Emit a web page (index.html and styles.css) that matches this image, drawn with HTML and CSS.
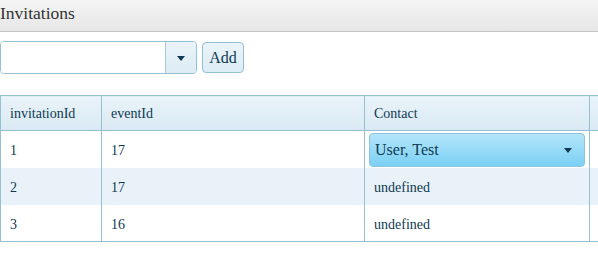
FILE: index.html
```html
<!DOCTYPE html>
<html lang="en">
<head>
  <meta charset="UTF-8" />
  <title>Invitations</title>
  <link rel="stylesheet" href="styles.css">
</head>
<body>
  <div class="page-header">Invitations</div>

  <div class="toolbar">
    <div class="combo">
      <input type="text" class="combo-input" />
      <span class="combo-button"><span class="arrow"></span></span>
    </div>
    <button class="add-btn">Add</button>
  </div>

  <table class="grid">
    <colgroup>
      <col class="col-id">
      <col class="col-event">
      <col class="col-contact">
      <col>
    </colgroup>
    <thead>
      <tr>
        <th>invitationId</th>
        <th>eventId</th>
        <th>Contact</th>
        <th></th>
      </tr>
    </thead>
    <tbody>
      <tr>
        <td>1</td>
        <td>17</td>
        <td class="edit-cell">
          <div class="dropdown">
            <span>User, Test</span>
            <span class="arrow"></span>
          </div>
        </td>
        <td></td>
      </tr>
      <tr class="alt">
        <td>2</td>
        <td>17</td>
        <td>undefined</td>
        <td></td>
      </tr>
      <tr>
        <td>3</td>
        <td>16</td>
        <td>undefined</td>
        <td></td>
      </tr>
    </tbody>
  </table>
</body>
</html>
```

FILE: styles.css
```css
* {
  box-sizing: border-box;
}

body {
  margin: 0;
  padding: 0;
  font-family: "Liberation Serif", "Times New Roman", serif;
  color: #0f3a52;
  background: #fff;
  overflow: hidden;
}

.page-header {
  height: 32px;
  padding: 3px 0 0 0;
  font-family: "Liberation Serif", serif;
  font-size: 17.5px;
  color: #333;
  background: linear-gradient(to bottom, #f5f5f5, #e6e6e6);
  border-bottom: 1px solid #c5c5c5;
}

.toolbar {
  display: flex;
  align-items: center;
  gap: 5px;
  margin-top: 9px;
  height: 33px;
}

.combo {
  display: flex;
  width: 197px;
  height: 33px;
  border: 1px solid #94c0d2;
  border-radius: 4px;
  overflow: hidden;
}

.combo-input {
  flex: 1;
  min-width: 0;
  border: none;
  outline: none;
  padding: 0 6px;
  font-family: "Liberation Serif", serif;
  font-size: 14px;
  background: #fff;
}

.combo-button {
  width: 31px;
  display: flex;
  align-items: center;
  justify-content: center;
  border-left: 1px solid #a9cbdb;
  background: linear-gradient(to bottom, #eaf3f9, #dcecf5);
}

.arrow {
  width: 0;
  height: 0;
  border-left: 4px solid transparent;
  border-right: 4px solid transparent;
  border-top: 5px solid #0f3a52;
  margin-top: 2px;
}

.add-btn {
  height: 31px;
  width: 42px;
  padding: 0;
  font-family: "Liberation Serif", serif;
  font-size: 16px;
  color: #0f3a52;
  background: linear-gradient(to bottom, #eaf3f9, #dcecf5);
  border: 1px solid #94c0d2;
  border-radius: 4px;
}

.grid {
  margin-top: 21px;
  width: 100%;
  table-layout: fixed;
  border-collapse: collapse;
  font-family: "Liberation Serif", serif;
  font-size: 14px;
}

.col-id {
  width: 101px;
}

.col-event {
  width: 263px;
}

.col-contact {
  width: 225px;
}

.grid th,
.grid td {
  border: 1px solid #94c0d2;
  text-align: left;
  padding: 4px 9px 0 9px;
  font-weight: normal;
  white-space: nowrap;
  overflow: hidden;
}

.grid th:last-child,
.grid td:last-child {
  border-right: none;
}

.grid th {
  height: 35px;
  padding-top: 2px;
  background: linear-gradient(to bottom, #eaf3f9, #d9e9f3);
}

.grid td {
  height: 37px;
  border-top: none;
  border-bottom: none;
}

.grid tbody tr:last-child td {
  border-bottom: 1px solid #94c0d2;
}

.grid tr.alt td {
  background: #e8f2f8;
}

.grid td.edit-cell {
  padding: 1px 4px 0 4px;
}

.dropdown {
  display: flex;
  align-items: center;
  justify-content: space-between;
  height: 34px;
  padding: 0 12px 0 5px;
  border: 1px solid #8cc4dc;
  border-radius: 4px;
  background: linear-gradient(to bottom, #b4e5fa, #7ad0f5);
  font-size: 16px;
}
```
